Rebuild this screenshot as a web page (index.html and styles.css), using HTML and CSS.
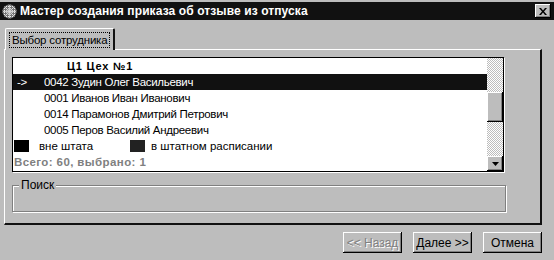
FILE: index.html
```html
<!DOCTYPE html>
<html lang="ru">

<head>
    <meta charset="UTF-8" />
    <title>Мастер создания приказа об отзыве из отпуска</title>
    <link rel="stylesheet" href="styles.css">
</head>

<body>
    <div class="window">
        <div class="titlebar">
            <svg class="app-icon" width="15" height="15" viewBox="0 0 15 15">
                <defs>
                    <pattern id="dots" width="2" height="2" patternUnits="userSpaceOnUse">
                        <rect width="2" height="2" fill="#777" />
                        <rect width="1" height="1" fill="#eee" />
                    </pattern>
                </defs>
                <circle cx="7.5" cy="7.5" r="7" fill="url(#dots)" />
                <circle cx="7.5" cy="7.5" r="3" fill="#999" />
                <path d="M7.5 1v13M1 7.5h13M3 3l9 9M12 3l-9 9" stroke="#ddd" stroke-width="0.8" />
            </svg>
            <span class="title">Мастер создания приказа об отзыве из отпуска</span>
            <button class="close">
                <svg width="8" height="7" viewBox="0 0 8 7">
                    <path d="M0 0h2l2 2.5L6 0h2L5 3.5 8 7H6L4 4.5 2 7H0l3-3.5z" fill="#000" />
                </svg>
            </button>
        </div>

        <div class="tabs">
            <div class="tab"><span>Выбор сотрудника</span></div>
        </div>

        <div class="panel">
            <div class="listbox">
                <div class="rows">
                    <div class="row group">Ц1 Цех №1</div>
                    <div class="row selected"><span class="mark">-&gt;</span>0042 Зудин Олег Васильевич</div>
                    <div class="row">0001 Иванов Иван Иванович</div>
                    <div class="row">0014 Парамонов Дмитрий Петрович</div>
                    <div class="row">0005 Перов Василий Андреевич</div>
                    <div class="row legend">
                        <span class="swatch off"></span><span class="legend-text">вне штата</span>
                        <span class="swatch on"></span><span>в штатном расписании</span>
                    </div>
                    <div class="row total">Всего: 60, выбрано: 1</div>
                </div>
                <div class="scrollbar">
                    <div class="track"></div>
                    <div class="thumb"></div>
                    <div class="track"></div>
                    <div class="arrow">
                        <svg width="7" height="4" viewBox="0 0 7 4">
                            <path d="M0 0h7L3.5 4z" fill="#000" />
                        </svg>
                    </div>
                </div>
            </div>

            <div class="search">
                <span class="search-label">Поиск</span>
            </div>
        </div>

        <div class="buttons">
            <button class="btn disabled">&lt;&lt; Назад</button>
            <button class="btn">Далее &gt;&gt;</button>
            <button class="btn">Отмена</button>
        </div>
    </div>
</body>

</html>
```

FILE: styles.css
```css
html,
body {
    margin: 0;
    background-color: #bdbdbd;
}

.window {
    width: 554px;
    height: 260px;
    font-family: "Liberation Sans", Arial, sans-serif;
    font-size: 11px;
    color: #000;
    padding-top: 2px;
    box-sizing: border-box;
}

.titlebar {
    height: 18px;
    background-color: #111;
    display: flex;
    align-items: center;
    padding: 0 3px 0 2px;
}

.app-icon {
    margin-right: 3px;
}

.title {
    flex: 1;
    color: #fff;
    font-weight: bold;
    font-size: 12px;
    letter-spacing: 0.1px;
}

.close {
    width: 16px;
    height: 14px;
    padding: 0;
    display: flex;
    align-items: center;
    justify-content: center;
    background-color: #bdbdbd;
    border: none;
    box-shadow: inset -1px -1px #000, inset 1px 1px #fff, inset -2px -2px #808080;
}

.tabs {
    display: flex;
    padding: 8px 0 0 5px;
}

.tab {
    height: 22px;
    padding: 3px 3px 0;
    box-sizing: border-box;
    border-left: 1px solid #fff;
    border-top: 1px solid #fff;
    border-right: 2px solid #111;
    border-radius: 2px 2px 0 0;
    margin-bottom: -1px;
    position: relative;
    background-color: #bdbdbd;
    z-index: 1;
}

.tab span {
    display: block;
    padding: 0 2px;
    font-size: 11.5px;
    letter-spacing: -0.2px;
    border: 1px dotted #000;
    line-height: 14px;
}

.panel {
    margin-left: 4px;
    width: 538px;
    height: 176px;
    box-sizing: border-box;
    border-left: 1px solid #fff;
    border-top: 1px solid #fff;
    border-right: 2px solid #111;
    border-bottom: 2px solid #111;
    padding: 7px 0 0 7px;
}

.listbox {
    width: 492px;
    height: 115px;
    box-sizing: border-box;
    border: 1px solid #000;
    box-shadow: 1px 1px 0 #fff;
    background-color: #fff;
    display: flex;
}

.rows {
    flex: 1;
}

.row {
    height: 16px;
    line-height: 16px;
    padding-left: 31px;
    white-space: nowrap;
    font-size: 11.5px;
    letter-spacing: -0.3px;
}

.row.group {
    padding-left: 54px;
    font-weight: bold;
    font-size: 11px;
    letter-spacing: 0.8px;
}

.row.selected {
    background-color: #111;
    color: #fff;
    padding-left: 4px;
}

.mark {
    display: inline-block;
    width: 27px;
}

.row.legend {
    display: flex;
    align-items: center;
    padding-left: 1px;
    letter-spacing: 0;
}

.swatch {
    width: 15px;
    height: 12px;
    margin-right: 10px;
}

.swatch.off {
    background-color: #000;
}

.swatch.on {
    background-color: #222;
    margin-right: 6px;
}

.legend-text {
    width: 91px;
}

.row.total {
    padding-left: 1px;
    font-weight: bold;
    color: #808080;
    letter-spacing: 0.4px;
}

.scrollbar {
    width: 16px;
    display: flex;
    flex-direction: column;
}

.track {
    flex: 1;
    background: repeating-conic-gradient(#bdbdbd 0 25%, #fff 0 50%) 0 0 / 2px 2px;
}

.thumb,
.arrow {
    background-color: #bdbdbd;
    box-shadow: inset -1px -1px #000, inset 1px 1px #fff, inset -2px -2px #808080;
}

.thumb {
    height: 30px;
}

.arrow {
    height: 15px;
    display: flex;
    align-items: center;
    justify-content: center;
}

.search {
    position: relative;
    margin-top: 13px;
    width: 492px;
    height: 25px;
    border: 1px solid #808080;
    box-shadow: inset 1px 1px #fff, 1px 1px #fff;
}

.search-label {
    position: absolute;
    left: 6px;
    top: -8px;
    padding: 0 2px;
    background-color: #bdbdbd;
    font-size: 12px;
    line-height: 14px;
}

.buttons {
    display: flex;
    justify-content: flex-end;
    gap: 11px;
    padding: 7px 12px 0 0;
}

.btn {
    width: 59px;
    height: 21px;
    padding: 0;
    font-family: "Liberation Sans", Arial, sans-serif;
    font-size: 12px;
    color: #000;
    background-color: #bdbdbd;
    border: none;
    box-shadow: inset -1px -1px #000, inset 1px 1px #fff, inset -2px -2px #808080;
}

.btn.disabled {
    color: #808080;
    text-shadow: 1px 1px #fff;
}
```
